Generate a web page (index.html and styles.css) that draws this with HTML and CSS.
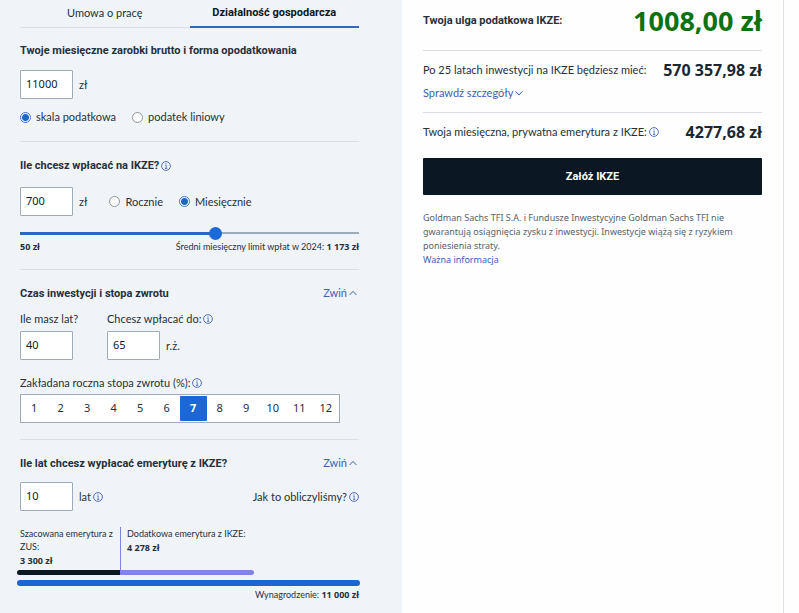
FILE: index.html
```html
<!DOCTYPE html>
<html lang="pl">
<head>
<meta charset="utf-8">
<meta name="viewport" content="width=device-width, initial-scale=1">
<title>Kalkulator IKZE</title>
<link rel="stylesheet" href="styles.css">
</head>
<body>
<svg class="sprite" aria-hidden="true">
  <symbol id="info" viewBox="0 0 10 10"><circle cx="5" cy="5" r="4.4" fill="none" stroke="currentColor" stroke-width="0.9"/><path d="M4.3 4.3H5.2V7.4M4 7.4H6.3" fill="none" stroke="currentColor" stroke-width="0.8"/><circle cx="5" cy="2.8" r="0.6" fill="currentColor"/></symbol>
  <symbol id="up" viewBox="0 0 8 8"><path d="M0.6 6L4 2.4L7.4 6" fill="none" stroke="currentColor" stroke-width="1"/></symbol>
  <symbol id="down" viewBox="0 0 8 8"><path d="M0.6 2.4L4 6L7.4 2.4" fill="none" stroke="currentColor" stroke-width="1"/></symbol>
</svg>
<main class="calculator">
  <form class="panel">
    <div class="tabs" role="tablist">
      <button type="button" class="tab" role="tab" aria-selected="false">Umowa o pracę</button>
      <button type="button" class="tab tab-active" role="tab" aria-selected="true">Działalność gospodarcza</button>
    </div>

    <section class="section section-income">
      <h2><label for="salary">Twoje miesięczne zarobki brutto i forma opodatkowania</label></h2>
      <div class="row"><input class="field" id="salary" type="text" value="11000"><span>zł</span></div>
      <div class="row choices">
        <label class="choice"><input type="radio" name="tax" checked>skala podatkowa</label>
        <label class="choice"><input type="radio" name="tax">podatek liniowy</label>
      </div>
    </section>

    <section class="section section-payment">
      <h2><label for="payment">Ile chcesz wpłacać na IKZE?</label><svg class="icon"><use href="#info"/></svg></h2>
      <div class="row">
        <input class="field" id="payment" type="text" value="700"><span>zł</span>
        <div class="row period">
          <label class="choice"><input type="radio" name="period">Rocznie</label>
          <label class="choice"><input type="radio" name="period" checked>Miesięcznie</label>
        </div>
      </div>
      <input class="slider" type="range" min="50" max="1173" value="700" aria-label="Kwota wpłaty">
      <div class="between small"><b>50 zł</b><span>Średni miesięczny limit wpłat w 2024: <b>1 173 zł</b></span></div>
    </section>

    <section class="section section-time">
      <div class="between"><h2>Czas inwestycji i stopa zwrotu</h2><button type="button" class="toggle">Zwiń<svg class="chevron"><use href="#up"/></svg></button></div>
      <div class="ages">
        <div><label class="caption" for="age">Ile masz lat?</label><input class="field" id="age" type="text" value="40"></div>
        <div><label class="caption" for="until">Chcesz wpłacać do:<svg class="icon"><use href="#info"/></svg></label><div class="row"><input class="field" id="until" type="text" value="65"><span>r.ż.</span></div></div>
      </div>
      <p class="caption rate-label" id="rate-label">Zakładana roczna stopa zwrotu (%):<svg class="icon"><use href="#info"/></svg></p>
      <div class="rates" role="group" aria-labelledby="rate-label">
        <button type="button">1</button><button type="button">2</button><button type="button">3</button><button type="button">4</button><button type="button">5</button><button type="button">6</button><button type="button" class="chosen" aria-pressed="true">7</button><button type="button">8</button><button type="button">9</button><button type="button">10</button><button type="button">11</button><button type="button">12</button>
      </div>
    </section>

    <section class="section section-payout">
      <div class="between"><h2><label for="years">Ile lat chcesz wypłacać emeryturę z IKZE?</label></h2><button type="button" class="toggle">Zwiń<svg class="chevron"><use href="#up"/></svg></button></div>
      <div class="between">
        <div class="row"><input class="field" id="years" type="text" value="10"><span class="caption">lat<svg class="icon"><use href="#info"/></svg></span></div>
        <span class="caption">Jak to obliczyliśmy?<svg class="icon"><use href="#info"/></svg></span>
      </div>
      <div class="chart small">
        <div class="parts">
          <div class="part part-zus"><p>Szacowana emerytura z ZUS:</p><b>3 300 zł</b></div>
          <div class="part part-ikze"><p>Dodatkowa emerytura z IKZE:</p><b>4 278 zł</b></div>
        </div>
        <div class="bars"><div class="bar-zus"></div><div class="bar-ikze"></div></div>
        <div class="bar-total"></div>
        <p class="total">Wynagrodzenie: <b>11 000 zł</b></p>
      </div>
    </section>
  </form>

  <aside class="summary">
    <div class="result result-tax"><b>Twoja ulga podatkowa IKZE:</b><strong class="relief">1008,00 zł</strong></div>
    <div class="result-group">
      <div class="result"><span>Po 25 latach inwestycji na IKZE będziesz mieć:</span><strong>570 357,98 zł</strong></div>
      <button type="button" class="toggle details">Sprawdź szczegóły<svg class="chevron"><use href="#down"/></svg></button>
    </div>
    <div class="result result-pension"><span class="caption">Twoja miesięczna, prywatna emerytura z IKZE:<svg class="icon"><use href="#info"/></svg></span><strong>4277,68 zł</strong></div>
    <button type="button" class="open">Załóż IKZE</button>
    <p class="note">Goldman Sachs TFI S.A. i Fundusze Inwestycyjne Goldman Sachs TFI nie gwarantują osiągnięcia zysku z inwestycji. Inwestycje wiążą się z ryzykiem poniesienia straty.<br><a href="#">Ważna informacja</a></p>
  </aside>
</main>
</body>
</html>
```
FILE: styles.css
```css
body {
  margin: 0;
  background: #fefefe;
  color: #25303b;
  font: 11px/18px Lato, "Noto Sans", sans-serif;
}
h2, p { margin: 0; font-size: inherit; }
button, input { font: inherit; color: inherit; }
button { border: 0; padding: 0; background: none; cursor: pointer; }
.sprite { position: absolute; width: 0; height: 0; }

.calculator { display: flex; min-height: 100vh; margin-right: 15px; }
.panel { flex: 1 1 0; min-width: 0; padding: 0 43px 0 20px; background: #f0f4f9; }
.summary { flex: 1 1 0; min-width: 0; padding: 0 21px; border-right: 1px solid #dfe2e6; }

.tabs { display: flex; }
.tab { flex: 1; height: 28px; padding-bottom: 3px; box-shadow: inset 0 -1px #d9dfe5; }
.tab-active { font-weight: bold; color: #0b1722; box-shadow: inset 0 -2px #3569b4; }

.section { padding: 14px 0 15px; border-bottom: 1px solid #d9dfe5; }
.section-income { padding-top: 13px; }
.section-payment, .section-time { padding-bottom: 16px; }
.section-payout { border: 0; padding-bottom: 8px; }
h2 { display: flex; align-items: center; margin-bottom: 11px; padding-top: 2px; line-height: 16px; font-weight: bold; }
.section-payment h2 { margin-bottom: 13px; }
.section-time h2 { margin-bottom: 8px; }
.section-payout h2 { margin-bottom: 10px; }
.row { display: flex; align-items: center; gap: 6px; }
.between { display: flex; align-items: center; justify-content: space-between; }
.caption { display: flex; align-items: center; }
.icon { flex: none; width: 10px; height: 10px; margin-left: 2px; color: #3f62b8; }
.chevron { width: 8px; height: 8px; margin: 0 2px; }
.toggle { display: flex; align-items: center; color: #3a62b5; }
.between .toggle { align-self: flex-start; }

.small { font-size: 9px; line-height: 13px; }
h2, .tab-active, .result b, .open { font-family: Roboto, sans-serif; }
.field, .rates, .result strong, .small b, .note { font-family: "Noto Sans", sans-serif; }
.field {
  box-sizing: border-box;
  width: 53px;
  height: 29px;
  padding: 0 5px 2px;
  border: 1px solid #9eabb9;
  border-radius: 1px;
  background: #fff;
  color: #111c26;
}
.choices { gap: 16px; margin-top: 9px; }
.period { gap: 16px; margin-left: 16px; }
.choice { display: flex; align-items: center; gap: 5px; }
.choice input {
  appearance: none;
  width: 11px;
  height: 11px;
  margin: 0;
  border: 1px solid #8d979f;
  border-radius: 50%;
  background: #fff;
}
.choice input:checked { border-color: #3b77cf; background: radial-gradient(circle, #1c66d2 3px, #fff 4px); }

.slider {
  appearance: none;
  display: block;
  width: 100%;
  height: 13px;
  margin: 11px 0 0;
  background:
    linear-gradient(#2a68bd, #2a68bd) 0 5px / 58% 3px no-repeat,
    linear-gradient(#9dabb9, #9dabb9) 0 5px / 100% 2px no-repeat;
}
.slider::-webkit-slider-thumb { appearance: none; width: 13px; height: 13px; border-radius: 50%; background: #1c69d8; }

.ages { display: flex; gap: 34px; }
.ages > div:first-child { width: 53px; white-space: nowrap; }
.ages .caption { margin-bottom: 3px; }
.rate-label { margin: 14px 0 2px; }
.rates {
  display: flex;
  box-sizing: border-box;
  max-width: 320px;
  height: 29px;
  padding: 1px 0;
  border: 1px solid #9eabb9;
  background: #fff;
}
.rates button { flex: 1; padding-bottom: 1px; }
.rates .chosen { border-radius: 1px; background: #1c66d8; color: #fff; font-weight: bold; }

.chart { margin: 16px -1px 0 -3px; }
.parts, .bars { display: flex; width: 69%; }
.part { box-sizing: border-box; padding-bottom: 2px; }
.part b { display: block; line-height: 15px; }
.part-zus { flex: none; width: 103px; padding-left: 3px; }
.part-ikze { flex: 1; padding-left: 6px; border-left: 1px solid #7f83e3; white-space: nowrap; }
.bars { height: 5px; overflow: hidden; border-radius: 3px; }
.bar-zus { width: 103px; background: #0b1722; }
.bar-ikze { flex: 1; background: #8084e8; }
.bar-total { height: 6px; margin: 5px 0 2px; border-radius: 3px; background: #1c66d2; }
.total { padding-right: 1px; text-align: right; }

.result { display: flex; align-items: center; justify-content: space-between; white-space: nowrap; }
.result strong { font-size: 16px; color: #1a2631; }
.result-tax { height: 42px; padding-bottom: 8px; border-bottom: 1px solid #dadee2; }
.result .relief { font-size: 27px; color: #0a720e; }
.result-group { padding: 10px 0; border-bottom: 1px solid #dadee2; }
.details { margin-top: 5px; }
.result-pension { margin: 10px 0 17px; }
.open { width: 100%; height: 37px; border-radius: 1px; background: #0b1722; color: #fff; font-weight: bold; }
.note { margin-top: 16px; font-size: 9px; line-height: 14px; color: #56636c; }
.note a { color: #3a62b5; text-decoration: none; }
```
